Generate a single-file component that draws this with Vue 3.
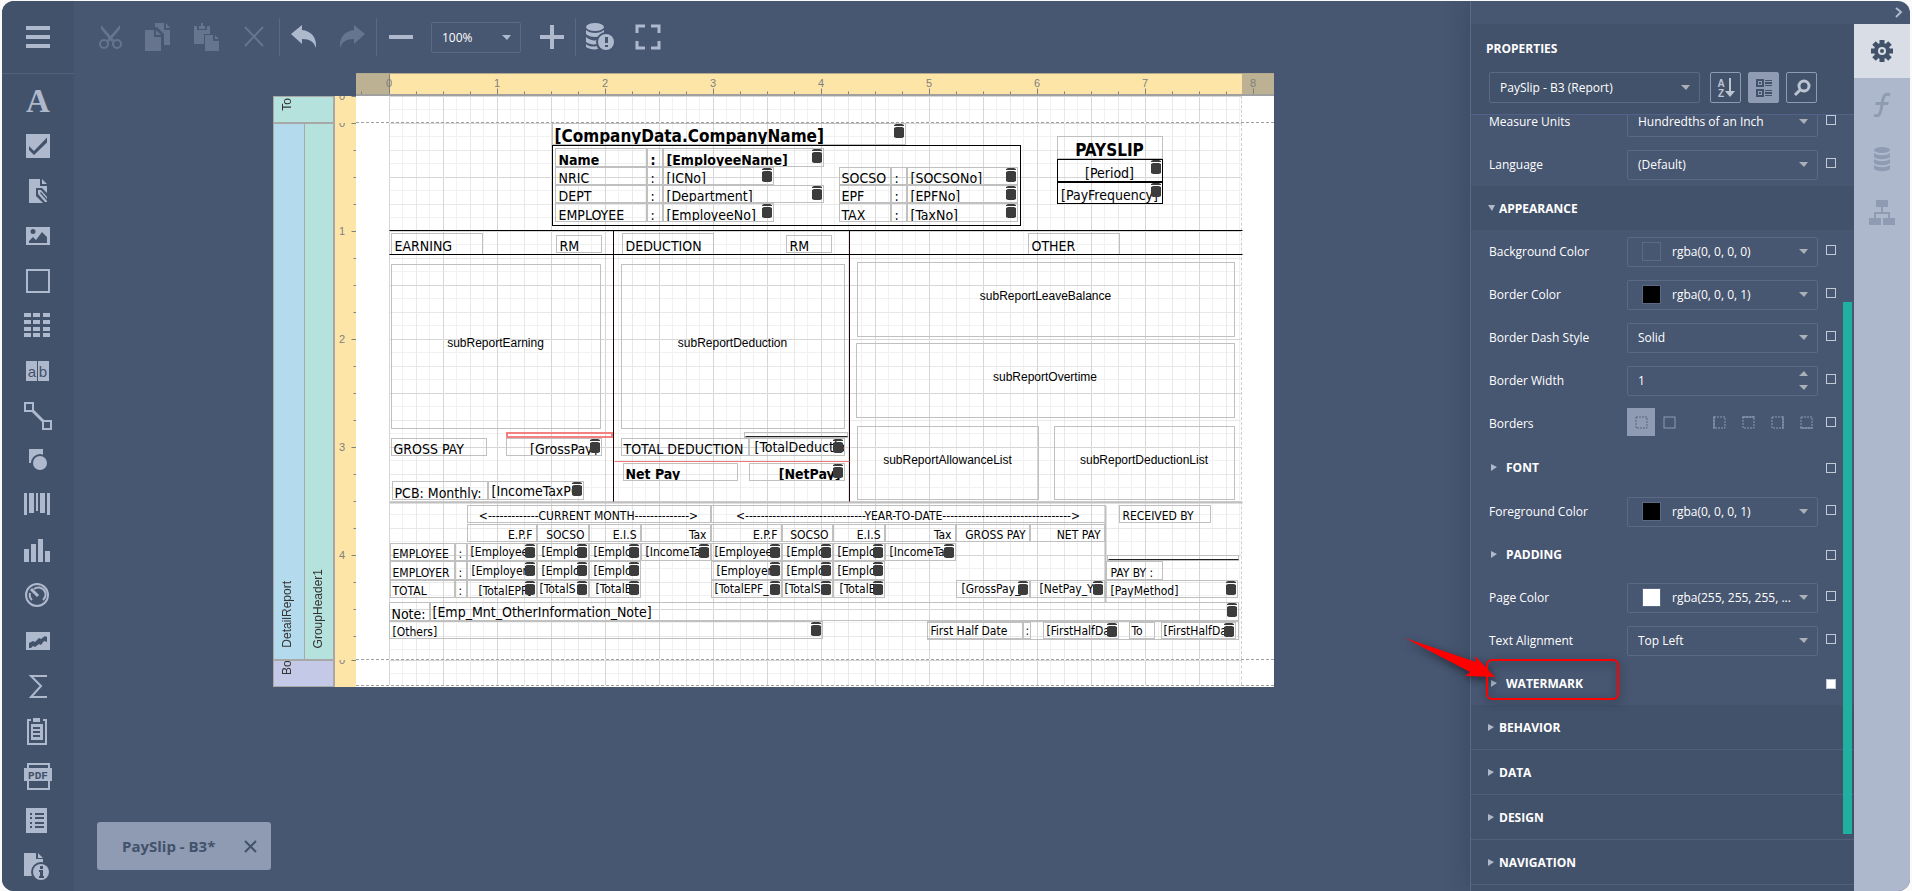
<script setup>
import { ref } from 'vue'

const zoom = ref('100%')
const component = ref('PaySlip - B3 (Report)')

const tools = [
  'label', 'checkbox', 'richtext', 'picture', 'panel', 'table', 'comb', 'line', 'shape',
  'barcode', 'chart', 'gauge', 'sparkline', 'pivot', 'subreport', 'pdf', 'toc', 'pageinfo',
]

// bands of the report, heights are in screen pixels at 100% zoom
const bands = [
  { id: 'top', height: 27, ticks: 0 },
  { id: 'group', height: 537, ticks: 19 },
  { id: 'bottom', height: 26, ticks: 0 },
]

// x, y, width, height, text, css classes, left padding
const field = (x, y, w, h, text = '', cls = '', pad = 3) => ({ x, y, w, h, text, cls, pad })

const fields = [
  field(163, 0, 354, 22, '[CompanyData.CompanyName]', 'lg db drop', 2),
  field(163, 22, 469, 81, '', 'black'),
  field(166, 25, 92, 19, 'Name', 'bold drop'),
  field(258, 25, 16, 19, ':', 'bold drop'),
  field(274, 25, 161, 19, '[EmployeeName]', 'bold db drop'),
  field(166, 44, 92, 18, 'NRIC', 'drop'),
  field(258, 44, 16, 18, ':', 'drop'),
  field(274, 44, 111, 18, '[ICNo]', 'db drop'),
  field(166, 62, 92, 18, 'DEPT', 'drop'),
  field(258, 62, 16, 18, ':', 'drop'),
  field(274, 62, 161, 18, '[Department]', 'db drop'),
  field(166, 80, 92, 19, 'EMPLOYEE', 'drop'),
  field(258, 80, 16, 19, ':', 'drop'),
  field(274, 80, 111, 19, '[EmployeeNo]', 'db drop'),
  field(450, 44, 52, 18, 'SOCSO', 'drop', 2),
  field(502, 44, 16, 18, ':', 'drop'),
  field(518, 44, 111, 18, '[SOCSONo]', 'db drop'),
  field(450, 62, 52, 18, 'EPF', 'drop', 2),
  field(502, 62, 16, 18, ':', 'drop'),
  field(518, 62, 111, 18, '[EPFNo]', 'db drop'),
  field(450, 80, 52, 19, 'TAX', 'drop', 2),
  field(502, 80, 16, 19, ':', 'drop'),
  field(518, 80, 111, 19, '[TaxNo]', 'db drop'),
  field(668, 13, 106, 23, 'PAYSLIP', 'lg center drop', 0),
  field(668, 36, 106, 23, '[Period]', 'black center db drop', 0),
  field(668, 59, 106, 22, '[PayFrequency]', 'black center db drop', 0),

  field(2, 110, 92, 22, 'EARNING', 'drop'),
  field(167, 112, 46, 18, 'RM', 'drop'),
  field(233, 110, 92, 22, 'DEDUCTION', 'drop'),
  field(397, 112, 46, 18, 'RM', 'drop'),
  field(639, 110, 92, 22, 'OTHER', 'drop'),

  field(2, 141, 210, 165, 'subReportEarning', 'sub', 0),
  field(232, 141, 224, 165, 'subReportDeduction', 'sub', 0),
  field(468, 139, 378, 75, 'subReportLeaveBalance', 'sub', 0),
  field(467, 220, 379, 75, 'subReportOvertime', 'sub', 0),
  field(468, 303, 182, 74, 'subReportAllowanceList', 'sub', 0),
  field(665, 303, 181, 74, 'subReportDeductionList', 'sub', 0),

  field(117, 309, 107, 6, '', 'error'),
  field(2, 315, 96, 18, 'GROSS PAY', 'drop', 2),
  field(117, 315, 96, 18, '[GrossPay]', 'right db drop', 0),
  field(355, 309, 104, 6),
  field(232, 315, 128, 18, 'TOTAL DEDUCTION', 'drop', 2),
  field(360, 315, 96, 18, '[TotalDeductio', 'db', 5),
  field(234, 340, 115, 18, 'Net Pay', 'bold drop', 2),
  field(360, 340, 96, 18, '[NetPay]', 'bold right db drop', 0),
  field(3, 358, 96, 19, 'PCB: Monthly:', 'drop', 2),
  field(99, 358, 96, 19, '[IncomeTaxPC', 'db'),

  field(78, 382, 244, 18, '<-------------CURRENT MONTH-------------->', 'sm center drop', 0),
  field(322, 382, 395, 18, '<-------------------------------YEAR-TO-DATE--------------------------------->', 'sm center drop', 0),
  field(730, 382, 92, 18, 'RECEIVED BY', 'sm drop'),
  field(78, 401, 70, 18, 'E.P.F', 'sm right drop'),
  field(148, 401, 52, 18, 'SOCSO', 'sm right drop', 0),
  field(200, 401, 52, 18, 'E.I.S', 'sm right drop'),
  field(252, 401, 70, 18, 'Tax', 'sm right drop'),
  field(322, 401, 71, 18, 'E.P.F', 'sm right drop'),
  field(393, 401, 51, 18, 'SOCSO', 'sm right drop', 0),
  field(444, 401, 52, 18, 'E.I.S', 'sm right drop'),
  field(496, 401, 71, 18, 'Tax', 'sm right drop'),
  field(567, 401, 74, 18, 'GROSS PAY', 'sm right drop'),
  field(641, 401, 75, 18, 'NET PAY', 'sm right drop'),

  field(1, 420, 65, 18, 'EMPLOYEE', 'sm drop', 2),
  field(66, 420, 12, 18, ':', 'sm drop'),
  field(78, 420, 70, 18, '[Employee', 'sm db'),
  field(148, 420, 52, 18, '[Emplo', 'sm db', 4),
  field(200, 420, 52, 18, '[Emplo', 'sm db', 4),
  field(252, 420, 70, 18, '[IncomeTa', 'sm db', 4),
  field(322, 420, 71, 18, '[Employee', 'sm db'),
  field(393, 420, 51, 18, '[Emplo', 'sm db', 4),
  field(444, 420, 52, 18, '[Emplo', 'sm db', 4),
  field(496, 420, 71, 18, '[IncomeTa', 'sm db', 4),

  field(1, 438, 65, 19, 'EMPLOYER', 'sm drop', 2),
  field(66, 438, 12, 19, ':', 'sm drop'),
  field(78, 438, 70, 19, '[Employer', 'sm db', 4),
  field(148, 438, 52, 19, '[Emplo', 'sm db', 4),
  field(200, 438, 52, 19, '[Emplo', 'sm db', 4),
  field(322, 438, 71, 19, '[Employer', 'sm db', 5),
  field(393, 438, 51, 19, '[Emplo', 'sm db', 4),
  field(444, 438, 52, 19, '[Emplo', 'sm db', 4),

  field(1, 457, 65, 18, 'TOTAL', 'sm drop', 2),
  field(66, 457, 12, 18, ':', 'sm drop'),
  field(78, 457, 70, 18, '[TotalEPF]', 'sm db drop', 11),
  field(148, 457, 52, 18, '[TotalS', 'sm db', 2),
  field(200, 457, 52, 18, '[TotalE', 'sm db', 6),
  field(322, 457, 71, 18, '[TotalEPF_', 'sm db', 3),
  field(393, 457, 51, 18, '[TotalS', 'sm db', 2),
  field(444, 457, 52, 18, '[TotalE', 'sm db', 6),
  field(567, 457, 74, 18, '[GrossPay_', 'sm db', 5),
  field(641, 457, 75, 18, '[NetPay_Y', 'sm db', 9),

  field(718, 432, 132, 6),
  field(717, 438, 57, 19, 'PAY BY :', 'sm drop', 4),
  field(717, 457, 132, 18, '[PayMethod]', 'sm db drop', 4),

  field(0, 479, 41, 19, 'Note:', 'drop', 2),
  field(41, 479, 809, 19, '[Emp_Mnt_OtherInformation_Note]', 'db', 2),
  field(0, 498, 434, 18, '[Others]', 'sm db drop'),
  field(538, 498, 312, 19),
  field(538, 499, 96, 17, 'First Half Date', 'sm'),
  field(634, 499, 8, 17, ':', 'sm', 2),
  field(654, 499, 76, 17, '[FirstHalfDa', 'sm db'),
  field(740, 499, 26, 17, 'To', 'sm', 2),
  field(772, 499, 75, 17, '[FirstHalfDa', 'sm db', 2),
]

// plain rules: x1, y1, x2, y2, colour, thickness
const rules = [
  [0, 107, 853, 107, '#000', 1],
  [0, 131, 853, 131, '#000', 1],
  [224, 107, 224, 379, '#1e0404', 1],
  [460, 107, 460, 379, '#1e0404', 1],
  [356, 313, 458, 313, '#222', 1],
  [225, 338, 460, 338, '#f07878', 1],
  [0, 379, 853, 379, '#c0c0c0', 2],
  [716, 382, 716, 479, '#c0c0c0', 2],
  [719, 436, 849, 436, '#222', 1],
]

const rows = [
  { kind: 'select', label: 'Measure Units', value: 'Hundredths of an Inch' },
  { kind: 'select', label: 'Language', value: '(Default)' },
  { kind: 'section', label: 'APPEARANCE', open: true },
  { kind: 'select', label: 'Background Color', value: 'rgba(0, 0, 0, 0)', color: 'transparent' },
  { kind: 'select', label: 'Border Color', value: 'rgba(0, 0, 0, 1)', color: '#000' },
  { kind: 'select', label: 'Border Dash Style', value: 'Solid' },
  { kind: 'number', label: 'Border Width', value: 1 },
  { kind: 'borders', label: 'Borders' },
  { kind: 'group', label: 'FONT' },
  { kind: 'select', label: 'Foreground Color', value: 'rgba(0, 0, 0, 1)', color: '#000' },
  { kind: 'group', label: 'PADDING' },
  { kind: 'select', label: 'Page Color', value: 'rgba(255, 255, 255, ...', color: '#fff' },
  { kind: 'select', label: 'Text Alignment', value: 'Top Left' },
  { kind: 'group', label: 'WATERMARK', modified: true },
  { kind: 'section', label: 'BEHAVIOR' },
  { kind: 'section', label: 'DATA' },
  { kind: 'section', label: 'DESIGN' },
  { kind: 'section', label: 'NAVIGATION' },
  { kind: 'section', label: '' },
]

const borderButtons = ['none', 'all', 'left', 'top', 'right', 'bottom']
const borderLines = {
  left: 'M1 0V13',
  top: 'M0 1H13',
  right: 'M12 0V13',
  bottom: 'M0 12H13',
}
</script>

<template>
  <div class="designer">
    <nav class="toolbox">
      <button class="menu-btn" title="Menu">
        <svg width="28" height="27"><path d="M2 2h24v4H2zM2 11h24v4H2zM2 20h24v4H2z" /></svg>
      </button>
      <button v-for="tool in tools" :key="tool" class="tool-btn" :title="tool">
        <svg width="28" height="27">
          <text v-if="tool === 'label'" x="14" y="24" class="serif-a">A</text>
          <template v-else-if="tool === 'checkbox'">
            <path d="M2 1h24v24H2z" />
            <path class="cut" d="M5 13l5 5L23 4.500v5L10 22l-5-5z" />
          </template>
          <template v-else-if="tool === 'richtext'">
            <path d="M5 1h11v7h7v17H5zM18 1l5 5h-5z" />
            <path class="cut" d="M12 10h6l7 7v9h-5l-8-8z" />
            <path d="M14 12h3l6 7v5h-2l-7-8z" />
            <path class="cut" d="M16 15l7 8v-2l-6-7z" />
          </template>
          <template v-else-if="tool === 'picture'">
            <path d="M2 4h24v18H2z" />
            <path class="cut" d="M5 18l4-4 3 3 6-8 5 5v6H5z" />
            <circle class="cut" cx="9" cy="8.500" r="2.500" />
          </template>
          <path v-else-if="tool === 'panel'" fill-rule="evenodd" d="M2 1h24v24H2zM4 3v20h20V3z" />
          <path
            v-else-if="tool === 'table'"
            d="M0 0h7v4H0zM9 0h7v4H9zM19 0h7v4h-7zM0 7h7v4H0zM9 7h7v4H9zM19 7h7v4h-7zM0 14h7v4H0zM9 14h7v4H9zM19 14h7v4h-7zM0 20h7v4H0zM9 20h7v4H9zM19 20h7v4h-7z"
          />
          <template v-else-if="tool === 'comb'">
            <path d="M2 3h11v20H2zM14 3h11v20H14z" />
            <text x="8" y="19" class="comb-text">a</text>
            <text x="19" y="19" class="comb-text">b</text>
          </template>
          <g v-else-if="tool === 'line'" class="stroke">
            <path stroke-width="2" d="M1 0h8v8H1zM19 18h8v8h-8z" />
            <path stroke-width="3" d="M9 8l10 10" />
          </g>
          <template v-else-if="tool === 'shape'">
            <path d="M5 1h14v14H5z" />
            <circle class="cut" cx="16" cy="15" r="9" />
            <circle cx="16" cy="15" r="7" />
          </template>
          <path v-else-if="tool === 'barcode'" d="M0 0h3v22H0zM5 0h5v20H5zM12 0h2v18h-2zM16 0h5v20h-5zM23 0h3v22h-3z" />
          <path v-else-if="tool === 'chart'" d="M0 11h5v13H0zM7 6h5v18H7zM14 1h5v23h-5zM21 13h5v11h-5z" />
          <g v-else-if="tool === 'gauge'" class="stroke">
            <circle cx="13" cy="12" r="11" stroke-width="2" />
            <path stroke-width="2" d="M8 17a7 7 0 0 1-2-7M10 6a7 7 0 0 1 9 11" />
            <path stroke-width="3" d="M7 6l7 7" />
          </g>
          <template v-else-if="tool === 'sparkline'">
            <path d="M2 4h24v18H2z" />
            <path class="cut" d="M5 15l4-2 2 1 4-4 2 1 4-3 2 1v5l-3-1-3 4-2-1-4 3-2-1-2 2H5z" />
          </template>
          <path v-else-if="tool === 'pivot'" class="stroke" stroke-width="2" d="M23 3H7l10 10L7 24h16" />
          <template v-else-if="tool === 'subreport'">
            <path class="stroke" stroke-width="2" d="M7 2H4v24h18V2h-3" />
            <path d="M9 0h7v4H9zM7 6h12v16H7z" />
            <path class="cut" d="M9 9h7v2H9zM9 13h7v2H9zM9 17h7v2H9z" />
          </template>
          <template v-else-if="tool === 'pdf'">
            <path class="stroke" stroke-width="2" d="M4 1h21v25H4z" />
            <path d="M0 5h28v13H0z" />
            <text x="14" y="16" class="pdf-text">PDF</text>
          </template>
          <template v-else-if="tool === 'toc'">
            <path d="M2 0h21v25H2z" />
            <path class="cut" d="M6 5h2v2H6zM11 5h9v2h-9zM6 9h2v2H6zM11 9h9v2h-9zM6 14h2v2H6zM11 14h9v2h-9zM6 18h2v2H6zM11 18h9v2h-9z" />
          </template>
          <template v-else>
            <path d="M0 0h12v6h7v17H0zM14 0l5 5h-5z" />
            <circle class="cut" cx="17" cy="19" r="10" />
            <circle cx="17" cy="19" r="8" />
            <path class="cut" d="M16 13h3v3h-3zM15 17h4v6h1v2h-5v-2h1v-4h-1z" />
          </template>
        </svg>
      </button>
    </nav>

    <main class="workspace">
      <div class="toolbar">
        <button class="bar-btn" title="Cut" disabled>
          <svg width="28" height="28">
            <g class="stroke"><circle cx="7" cy="21" r="4" stroke-width="2" /><circle cx="20" cy="21" r="4" stroke-width="2" /></g>
            <path d="M4 2l13 15-2 2L4 6zM23 2v4L12 19l-2-2z" />
          </svg>
        </button>
        <button class="bar-btn" title="Copy" disabled>
          <svg width="28" height="28">
            <path d="M10 0h9v7h6v15H10zM21 0l4 5h-4z" />
            <path class="cut" d="M0 4h12l7 7v17H0z" />
            <path d="M0 7h9v7h7v14H0zM11 7l5 5h-5z" />
          </svg>
        </button>
        <button class="bar-btn" title="Paste" disabled>
          <svg width="28" height="28">
            <path d="M1 3h3v4h10V3h3v8h-6v10H1zM6 3h2V0h2v3h2v3H6z" />
            <path d="M12 12h8v6h6v10H12zM22 12l4 4h-4z" />
          </svg>
        </button>
        <button class="bar-btn" title="Delete" disabled>
          <svg width="28" height="28"><path class="stroke" stroke-width="2" d="M4 4l18 19M22 4L4 23" /></svg>
        </button>
        <span class="bar-sep"></span>
        <button class="bar-btn" title="Undo">
          <svg width="28" height="28"><path d="M1 11L12 2v5c9 1 15 7 14 18-2-6-6-9-14-9v5z" /></svg>
        </button>
        <button class="bar-btn" title="Redo" disabled>
          <svg width="28" height="28"><path d="M27 11L16 2v5C7 8 1 14 2 25c2-6 6-9 14-9v5z" /></svg>
        </button>
        <span class="bar-sep"></span>
        <button class="bar-btn" title="Zoom Out">
          <svg width="28" height="28"><path d="M2 12h24v4H2z" /></svg>
        </button>
        <div class="select-wrap zoom-select">
          <select v-model="zoom" aria-label="Zoom">
            <option>100%</option>
          </select>
          <svg class="caret" width="9" height="5"><path d="M0 0h9L5 5z" /></svg>
        </div>
        <button class="bar-btn" title="Zoom In">
          <svg width="28" height="28"><path d="M3 12h10V2h4v10h10v4H17v10h-4V16H3z" /></svg>
        </button>
        <span class="bar-sep"></span>
        <button class="bar-btn" title="Validate Bindings">
          <svg width="28" height="28">
            <ellipse cx="9" cy="4" rx="9" ry="4" />
            <path d="M0 7c4 4 14 4 18 0v4C14 15 4 15 0 11zM0 14c3 3 8 4 12 3l-1 4C7 22 3 21 0 19zM0 21c3 3 8 3 11 2l1 3c-4 1-9 0-12-2z" />
            <ellipse class="cut" cx="20" cy="19" rx="10" ry="10" />
            <circle cx="20" cy="19" r="8" />
            <path class="cut" d="M19 14h3v6h-3zM19 22h3v2h-3z" />
          </svg>
        </button>
        <button class="bar-btn" title="Full Screen">
          <svg width="28" height="28"><path class="stroke" stroke-width="3" d="M3 10V3h8M17 3h8v7M25 18v7h-8M11 25H3v-7" /></svg>
        </button>
      </div>

      <div class="surface">
        <div class="ruler-x">
          <svg width="918" height="23">
            <rect x="0" y="0" width="33" height="23" class="outside" />
            <rect x="886" y="0" width="32" height="23" class="outside" />
            <path class="tick" d="M5 18v5M33 0v23" />
            <path v-for="n in 33" :key="n" class="tick" :d="`M${6 + n * 27} ${n % 4 === 1 ? 15 : 18}V23`" />
            <text v-for="n in 9" :key="n" :x="n * 108 - 75" y="14">{{ n - 1 }}</text>
          </svg>
        </div>

        <div class="band-tabs">
          <div class="band-tab teal short"><span>To</span></div>
          <div class="band-nest">
            <div class="band-tab blue"><span>DetailReport</span></div>
            <div class="band-tab teal"><span>GroupHeader1</span></div>
          </div>
          <div class="band-tab violet last"><span>Bo</span></div>
        </div>

        <div class="ruler-y">
          <svg v-for="band in bands" :key="band.id" width="22" :height="band.height">
            <path class="tick" d="M16 0h6" />
            <text x="7" y="4">0</text>
            <path v-for="n in band.ticks" :key="n" class="tick" :d="`M${n % 4 ? 18 : 16} ${n * 27}H22`" />
            <template v-if="band.ticks">
              <text v-for="n in 4" :key="n" x="7" :y="n * 108 + 4">{{ n }}</text>
            </template>
          </svg>
        </div>

        <div class="page">
          <section v-for="band in bands" :key="band.id" class="band" :style="{ height: band.height + 'px' }">
            <div class="band-body">
              <svg class="grid" width="100%" height="100%">
                <defs>
                  <pattern :id="'grid-' + band.id" width="54" height="54" patternUnits="userSpaceOnUse">
                    <path class="g1" d="M13 0v54M40 0v54M0 13h54M0 40h54" />
                    <path class="g2" d="M27 0v54M0 27h54" />
                    <path class="g3" d="M0 0v54M0 0h54" />
                  </pattern>
                </defs>
                <rect width="100%" height="100%" :fill="`url(#grid-${band.id})`" />
              </svg>
              <template v-if="band.id === 'group'">
                <div
                  v-for="(f, i) in fields"
                  :key="i"
                  class="field"
                  :class="f.cls"
                  :style="{
                    left: f.x + 'px',
                    top: f.y + 'px',
                    width: f.w + 'px',
                    height: f.h + 'px',
                    paddingLeft: f.pad + 'px',
                  }"
                >
                  <span v-if="f.text">{{ f.text }}</span>
                  <svg v-if="f.cls.includes('db')" class="db-icon" width="10" height="14">
                    <path d="M0 1l2-1h6l2 1v1H0zM0 4l2-1h6l2 1v9l-2 1H2l-2-1z" />
                  </svg>
                </div>
                <svg class="rules" width="100%" height="100%">
                  <path
                    v-for="(r, i) in rules"
                    :key="i"
                    :d="`M${r[0]} ${r[1]}L${r[2]} ${r[3]}`"
                    :stroke="r[4]"
                    :stroke-width="r[5]"
                  />
                </svg>
              </template>
            </div>
          </section>
        </div>
      </div>

      <div class="doc-tabs">
        <div class="doc-tab">
          <span>PaySlip - B3*</span>
          <button title="Close">
            <svg width="13" height="13"><path d="M1 1l11 11M12 1L1 12" /></svg>
          </button>
        </div>
      </div>
    </main>

    <aside class="side">
      <div class="side-top">
        <button title="Collapse">
          <svg width="8" height="11"><path d="M1 1l5 4-5 5" /></svg>
        </button>
      </div>
      <div class="side-body">
        <div class="properties">
          <header class="prop-head">
            <h2>PROPERTIES</h2>
            <div class="prop-tools">
              <div class="select-wrap component-select">
                <select v-model="component" aria-label="Component">
                  <option>PaySlip - B3 (Report)</option>
                </select>
                <svg class="caret" width="9" height="5"><path d="M0 0h9L5 5z" /></svg>
              </div>
              <button class="square-btn" title="Sort">
                <svg width="18" height="20">
                  <text x="4" y="9">A</text>
                  <text x="4" y="19">Z</text>
                  <path d="M12 0h2v13h4l-5 6-5-6h4z" />
                </svg>
              </button>
              <button class="square-btn active" title="Categories">
                <svg width="18" height="20">
                  <path class="stroke" stroke-width="2" d="M2 2h6v6H2zM2 12h6v6H2z" />
                  <path d="M4 4h2v2H4zM4 14h2v2H4zM10 2h7v1h-7zM10 4h7v2h-7zM10 7h7v1h-7zM10 12h7v1h-7zM10 14h7v2h-7zM10 17h7v1h-7z" />
                </svg>
              </button>
              <button class="square-btn" title="Search">
                <svg width="18" height="20"><path class="stroke" stroke-width="3" d="M7 12L2 17M6 8a5 5 0 1 1 10 0a5 5 0 1 1-10 0" /></svg>
              </button>
            </div>
          </header>

          <div class="prop-list">
            <template v-for="(row, i) in rows" :key="i">
              <button v-if="row.kind === 'section'" class="section" :class="{ open: row.open }">
                <svg class="expander" width="7" height="7"><path :d="row.open ? 'M0 0h7L4 6z' : 'M0 0l6 3-6 4z'" /></svg>
                {{ row.label }}
              </button>
              <div v-else class="prop-row" :class="row.kind">
                <button v-if="row.kind === 'group'" class="group-btn">
                  <svg class="expander" width="7" height="7"><path d="M0 0l6 3-6 4z" /></svg>
                  {{ row.label }}
                </button>
                <label v-else :for="'prop-' + i">{{ row.label }}</label>

                <div v-if="row.kind === 'select'" class="select-wrap editor">
                  <span v-if="row.color" class="swatch" :style="{ background: row.color }"></span>
                  <select :id="'prop-' + i" v-model="row.value" :class="{ colored: row.color }">
                    <option>{{ row.value }}</option>
                  </select>
                  <svg class="caret" width="9" height="5"><path d="M0 0h9L5 5z" /></svg>
                </div>
                <div v-else-if="row.kind === 'number'" class="select-wrap editor">
                  <input :id="'prop-' + i" v-model="row.value" type="text" />
                  <div class="spin">
                    <button title="Up"><svg width="9" height="5"><path d="M0 5h9L5 0z" /></svg></button>
                    <button title="Down"><svg width="9" height="5"><path d="M0 0h9L5 5z" /></svg></button>
                  </div>
                </div>
                <div v-else-if="row.kind === 'borders'" class="editor borders-editor">
                  <button
                    v-for="side in borderButtons"
                    :id="side === 'none' ? 'prop-' + i : undefined"
                    :key="side"
                    :class="[side, { active: side === 'none' }]"
                    :title="side"
                  >
                    <svg width="13" height="13">
                      <rect x="1" y="1" width="11" height="11" :class="{ dashed: side !== 'all' }" />
                      <path v-if="borderLines[side]" :d="borderLines[side]" />
                    </svg>
                  </button>
                </div>
                <input class="marker" type="checkbox" :checked="row.modified" :aria-label="row.label + ' modified'" />
              </div>
            </template>
          </div>
          <div class="scroll-thumb"></div>
        </div>

        <div class="side-tabs">
          <button class="active" title="Properties">
            <svg width="24" height="24">
              <circle cx="12" cy="12" r="8" />
              <path class="teeth" d="M12 1v22M1 12h22M4 4l16 16M20 4L4 20" />
              <circle class="hole" cx="12" cy="12" r="4" />
              <circle cx="12" cy="12" r="2" />
            </svg>
          </button>
          <button title="Expressions">
            <svg width="18" height="26">
              <path class="fx" d="M17 3c-4-2-6 0-7 4L8 18c-1 5-3 7-7 5" />
              <path d="M3 10h13l-1 3H2z" />
            </svg>
          </button>
          <button title="Fields">
            <svg width="18" height="26">
              <ellipse cx="9" cy="4" rx="8" ry="3" />
              <path d="M1 7c4 3 12 3 16 0v4c-4 3-12 3-16 0zM1 13c4 3 12 3 16 0v4c-4 3-12 3-16 0zM1 19c4 3 12 3 16 0v4c-4 3-12 3-16 0z" />
            </svg>
          </button>
          <button title="Report Explorer">
            <svg width="26" height="26">
              <path d="M7 0h12v7h-5v5h7v6h5v7H14v-7h5v-4H7v4h5v7H0v-7h5v-6h7V7H7z" />
            </svg>
          </button>
        </div>
      </div>

      <div class="callout">
        <svg width="92" height="48"><path d="M1 1l71 24-1-6 20 21-30-1 5-4z" /></svg>
        <div class="callout-box"></div>
      </div>
    </aside>
  </div>
</template>

<style>
body {
  margin: 0;
  background: #fafafa;
}
</style>

<style scoped>
* {
  box-sizing: border-box;
}

.designer {
  display: flex;
  height: calc(100vh - 1px);
  margin: 1px 2px 0;
  overflow: hidden;
  border-radius: 12px;
  background: #475671;
  color: #fff;
  font-family: 'Open Sans', 'Noto Sans', sans-serif;
  font-size: 12px;
}

button {
  display: flex;
  align-items: center;
  justify-content: center;
  padding: 0;
  border: 0;
  background: none;
  color: inherit;
  font: inherit;
  cursor: pointer;
}

svg {
  display: block;
  flex-shrink: 0;
  overflow: visible;
}

/* left toolbox */
.toolbox {
  width: 72px;
  flex-shrink: 0;
  background: #43526b;
}

.toolbox button {
  width: 100%;
}

.menu-btn {
  height: 73px;
  margin-bottom: 5px;
  border-bottom: 1px solid #50607d;
}

.tool-btn {
  height: 45px;
}

.toolbox svg,
.toolbar svg {
  fill: #afb9cd;
}

.toolbox .cut {
  fill: #43526b;
}

.toolbar .cut {
  fill: #475671;
}

.toolbox .stroke,
.toolbar .stroke {
  fill: none;
  stroke: #afb9cd;
}

.serif-a {
  font: bold 33px 'Liberation Serif', serif;
  text-anchor: middle;
}

.comb-text {
  fill: #43526b;
  font: 15px 'Liberation Sans', sans-serif;
  text-anchor: middle;
}

.pdf-text {
  fill: #43526b;
  font: bold 11px 'Liberation Mono', monospace;
  text-anchor: middle;
}

/* main area */
.workspace {
  display: flex;
  flex: 1;
  flex-direction: column;
  min-width: 0;
}

.toolbar {
  display: flex;
  align-items: center;
  height: 72px;
  padding-left: 13px;
  flex-shrink: 0;
}

.bar-btn {
  width: 48px;
  height: 48px;
}

.bar-btn:disabled {
  opacity: 0.3;
}

.bar-sep {
  width: 1px;
  height: 38px;
  background: #5a6983;
}

.select-wrap {
  position: relative;
  display: flex;
  align-items: center;
  height: 30px;
  border: 1px solid #5b6a84;
  border-radius: 2px;
}

.select-wrap select,
.select-wrap input {
  width: 100%;
  height: 100%;
  padding: 0 24px 0 10px;
  border: 0;
  outline: 0;
  appearance: none;
  background: transparent;
  color: #fff;
  font: inherit;
}

.select-wrap select.colored {
  padding-left: 44px;
}

.caret {
  position: absolute;
  right: 9px;
  fill: #abb0b6;
  pointer-events: none;
}

.zoom-select {
  width: 90px;
  height: 31px;
  margin: 0 6px;
}

/* report surface */
.surface {
  display: grid;
  grid-template-columns: 61px 22px 918px;
  grid-template-rows: 23px auto;
  justify-content: center;
  padding-left: 2px;
}

.ruler-x {
  grid-column: 3;
  overflow: hidden;
  background: #fde5a8;
  border-top: 1px solid #b3a98c;
  border-bottom: 2px solid #a0a0a0;
}

.ruler-x svg,
.ruler-y svg {
  font: 11px 'Liberation Sans', sans-serif;
  fill: #7f7f7f;
  text-anchor: middle;
}

.ruler-x svg {
  margin-top: -1px;
}

.outside {
  fill: #bdb193;
}

.tick {
  stroke: #808080;
  transform: translate(0.5px, 0.5px);
}

.ruler-y {
  background: #fde5a8;
  border-left: 1px solid #a8a8a8;
}

.ruler-y svg {
  overflow: hidden;
}

.band-tabs {
  display: flex;
  flex-direction: column;
  border: 1px solid #a8a8a8;
  color: #333;
  font: 12px 'Liberation Sans', sans-serif;
}

.band-tab {
  display: flex;
  flex: 1;
  overflow: hidden;
  padding: 0 0 11px 5px;
}

.band-tab span {
  align-self: flex-end;
  max-height: 100%;
  writing-mode: vertical-rl;
  transform: rotate(180deg);
  line-height: 16px;
}

.band-tab.short,
.band-tab.last {
  flex: 0 0 25px;
}

.band-tab.violet span {
  overflow: hidden;
}

.band-nest {
  display: flex;
  height: 539px;
  border-top: 2px solid #a8a8a8;
  border-bottom: 2px solid #a8a8a8;
}

.band-nest .blue {
  flex: 0 0 31px;
  border-right: 1px solid #a8a8a8;
}

.teal {
  background: #b5e2dc;
}

.blue {
  background: #b3daed;
}

.violet {
  background: #c5c9e8;
}

.page {
  background: #fff;
  color: #000;
  font: 14px 'DejaVu Sans Condensed', Tahoma, 'Noto Sans', sans-serif;
}

.band {
  padding: 0 32px 0 33px;
  border-bottom: 1px dashed #a0a0a0;
}

.band-body {
  position: relative;
  height: 100%;
  border-right: 1px dashed #d0d0d0;
}

.grid path {
  transform: translate(0.5px, 0.5px);
}

.g1 {
  stroke: #f1f1f1;
}

.g2 {
  stroke: #e8e8e8;
}

.g3 {
  stroke: #d6d6d6;
}

.field {
  position: absolute;
  display: flex;
  align-items: center;
  overflow: hidden;
  border: 1px solid #c0c0c0;
  white-space: pre;
}

.field.black {
  border-color: #000;
}

.field.error {
  border: 2px solid #f58080;
}

.field.sm {
  font-size: 12px;
}

.field.bold,
.field.lg {
  font-weight: bold;
}

.field.lg {
  font-size: 17px;
}

.field.drop {
  padding-top: 4px;
}

.field.center {
  justify-content: center;
}

.field.right {
  justify-content: flex-end;
  padding-right: 3px;
}

.field.sub {
  justify-content: center;
  padding-bottom: 7px;
  font: 12px 'Liberation Sans', sans-serif;
}

.db-icon {
  position: absolute;
  top: 0;
  right: 1px;
  fill: #3c3c3c;
}

.rules {
  position: absolute;
  inset: 0;
}

.rules path {
  transform: translate(0.5px, 0.5px);
}

.doc-tabs {
  display: flex;
  margin-top: auto;
  padding: 0 23px 21px;
}

.doc-tab {
  display: flex;
  align-items: center;
  gap: 29px;
  height: 48px;
  padding: 0 14px 0 25px;
  border-radius: 3px;
  background: #8e9bb2;
  color: #43526b;
  font-size: 15px;
  font-weight: bold;
}

.doc-tab path {
  fill: none;
  stroke: #43526b;
  stroke-width: 2;
}

/* right side */
.side {
  position: relative;
  display: flex;
  flex-direction: column;
  width: 440px;
  flex-shrink: 0;
  border-left: 1px solid #5b6a84;
  box-shadow: 0 0 24px rgba(20, 40, 50, 0.25);
}

.side-top {
  display: flex;
  align-items: center;
  justify-content: flex-end;
  height: 23px;
  padding-right: 7px;
  flex-shrink: 0;
}

.side-top path {
  fill: none;
  stroke: #afb9cd;
  stroke-width: 2;
}

.side-body {
  display: flex;
  flex: 1;
  min-height: 0;
}

.properties {
  position: relative;
  display: flex;
  flex: 1;
  flex-direction: column;
  min-width: 0;
}

.prop-head {
  height: 91px;
  padding: 16px 37px 0 15px;
  border-bottom: 1px solid #50628a;
  background: #43526b;
  flex-shrink: 0;
}

.prop-head h2 {
  margin: 0 0 14px;
  font-size: 12px;
  line-height: 18px;
}

.prop-tools {
  display: flex;
  gap: 7px;
  padding-left: 3px;
}

.component-select {
  flex: 1;
  height: 31px;
  margin-right: 3px;
}

.square-btn {
  width: 31px;
  height: 31px;
  border: 1px solid #8e9bb2;
  border-radius: 2px;
}

.square-btn svg {
  fill: #bcc4d2;
}

.square-btn .stroke {
  fill: none;
  stroke: #bcc4d2;
}

.square-btn text {
  font: bold 10px 'Liberation Sans', sans-serif;
  text-anchor: middle;
}

.square-btn.active {
  background: #8e9bb2;
}

.square-btn.active svg {
  fill: #43526b;
}

.square-btn.active .stroke {
  stroke: #43526b;
}

.prop-list {
  flex: 1;
  min-height: 0;
  overflow: hidden;
}

.prop-row:first-child {
  margin-top: -15px;
}

.prop-row {
  display: flex;
  align-items: center;
  height: 43px;
  padding: 0 18px;
}

.prop-row.borders + .group {
  height: 45px;
}

.prop-row label {
  flex: 1;
}

.editor {
  width: 191px;
  margin-right: 8px;
}

.swatch {
  position: absolute;
  left: 14px;
  width: 19px;
  height: 19px;
  border: 1px solid #5b6a84;
  pointer-events: none;
}

.spin {
  position: absolute;
  right: 9px;
  display: flex;
  flex-direction: column;
  gap: 9px;
  fill: #abb0b6;
}

.marker {
  width: 10px;
  height: 10px;
  margin: 0 0 3px;
  border: 1px solid #c3cad6;
  appearance: none;
}

.group .marker {
  margin: 0;
}

.marker:checked {
  background: #fff;
}

.borders-editor {
  display: flex;
  padding-bottom: 3px;
}

.borders-editor button {
  flex: 0 0 29px;
  height: 28px;
}

.borders-editor .active {
  flex-basis: 28px;
  background: #8e9bb2;
}

.borders-editor .all {
  margin-right: 21px;
}

.borders-editor svg {
  fill: none;
  stroke: #8e9bb2;
}

.borders-editor .active svg {
  stroke: #566580;
}

.borders-editor .dashed {
  stroke-dasharray: 2 1;
}

.section {
  justify-content: flex-start;
  gap: 4px;
  width: 100%;
  height: 45px;
  padding: 0 17px;
  border-bottom: 1px solid #50607d;
  background: #43526b;
  font-weight: bold;
}

.section.open {
  height: 44px;
  border-bottom: 0;
}

.group-btn {
  gap: 8px;
  margin-right: auto;
  padding-left: 2px;
  font-weight: bold;
}

.expander {
  fill: #aeb8c8;
}

.scroll-thumb {
  position: absolute;
  top: 278px;
  right: 2px;
  bottom: 57px;
  width: 9px;
  background: #20b0a0;
}

.side-tabs {
  width: 56px;
  background: #adb8cc;
}

.side-tabs button {
  width: 100%;
  height: 54px;
  fill: #8e9bb2;
}

.side-tabs .active {
  background: #d9dde5;
  fill: #43526b;
}

.side-tabs .teeth {
  stroke: #43526b;
  stroke-width: 5;
}

.side-tabs .hole {
  fill: #d9dde5;
}

.fx {
  fill: none;
  stroke: #8e9bb2;
  stroke-width: 3;
}

.callout {
  position: absolute;
  top: 636px;
  left: -67px;
  filter: drop-shadow(1px 3px 4px rgba(0, 0, 0, 0.5));
  fill: #f00;
  pointer-events: none;
}

.callout-box {
  width: 133px;
  height: 41px;
  margin: -26px 0 0 82px;
  border: 2px solid #f00;
  border-radius: 6px;
}
</style>
